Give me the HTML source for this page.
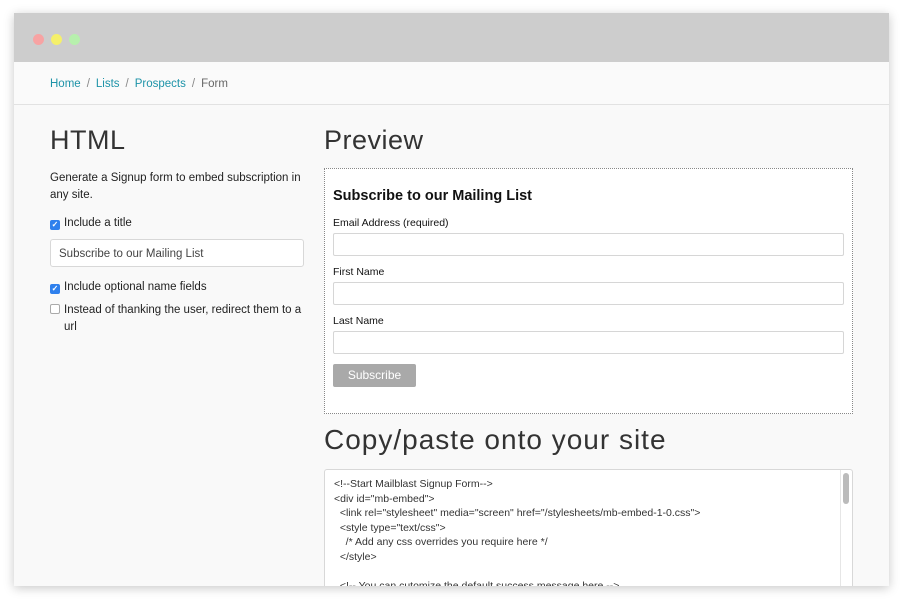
<!DOCTYPE html>
<html><head><meta charset="utf-8"><style>
*{box-sizing:border-box;margin:0;padding:0}
body{width:903px;height:600px;background:#fff;font-family:"Liberation Sans",sans-serif;position:relative;overflow:hidden}
.win{position:absolute;left:14px;top:13px;width:875px;height:573px;background:#f9f9f9;box-shadow:0 2px 10px rgba(0,0,0,.22);overflow:hidden}
.bar{height:49px;background:#cdcdcd;position:relative}
.dot{position:absolute;top:21px;width:11px;height:11px;border-radius:50%}
.crumb{height:43px;border-bottom:1px solid #e2e2e2;padding:16px 0 0 36px;font-size:11.5px;color:#666;background:#fafafa}
.crumb a{color:#1d93a8;text-decoration:none}
.crumb span{margin:0 6px;color:#888}
.l{position:absolute;left:36px;top:112px;width:254px;font-size:11.5px;color:#222}
h1{font-weight:normal;font-size:27px;color:#333;letter-spacing:.5px}
.cb{display:inline-block;width:10px;height:10px;border-radius:2px;vertical-align:-1px;margin-right:4px;color:#fff;font-size:8px;line-height:10px;text-align:center;font-weight:bold}
.on{background:#2f80ed}
.off{border:1px solid #aaa;background:#fff}
.inp{border:1px solid #d8d8d8;border-radius:3px;background:#fff;height:28px;padding:8px 8px;font-size:11.5px;color:#444}
.r{position:absolute;left:310px;top:112px;width:529px}
.pv{margin-top:12px;border:1px dotted #888;height:246px;background:#fff;padding:19px 8px 0 8px;font-size:10.5px;color:#111}
.pv h3{font-size:14.5px;margin-bottom:13px}
.lb{line-height:13px}
.fi{border:1px solid #d6d6d6;border-radius:2px;height:23px;margin:3px 0 10px}
.btn{width:83px;height:23px;background:#a9a9a9;color:#fff;border-radius:2px;font-size:12px;text-align:center;line-height:23px;margin-top:3px}
.code{margin-top:13px;border:1px solid #d8d8d8;border-radius:3px;background:#fff;height:140px;padding:7px 9px;font-size:10.5px;line-height:14.6px;color:#333;white-space:pre;position:relative}
.sb{position:absolute;right:3px;top:3px;width:6px;height:31px;background:#bbb;border-radius:3px}
.sbt{position:absolute;right:0;top:0;width:12px;height:140px;border-left:1px solid #e6e6e6}
</style></head><body>
<div class="win">
<div class="bar"><div class="dot" style="left:19px;background:#f7a3a3"></div><div class="dot" style="left:37px;background:#f5f06a"></div><div class="dot" style="left:55px;background:#b7f0ad"></div></div>
<div class="crumb"><a>Home</a><span>/</span><a>Lists</a><span>/</span><a>Prospects</a><span>/</span>Form</div>
<div class="l">
<h1>HTML</h1>
<p style="margin-top:14px;line-height:17px">Generate a Signup form to embed subscription in any site.</p>
<p style="margin-top:13px"><span class="cb on">✓</span>Include a title</p>
<div class="inp" style="margin-top:9px">Subscribe to our Mailing List</div>
<p style="margin-top:14px"><span class="cb on">✓</span>Include optional name fields</p>
<p style="margin-top:8px;padding-left:14px;text-indent:-14px;line-height:17px"><span class="cb off"></span>Instead of thanking the user, redirect them to a url</p>
</div>
<div class="r">
<h1>Preview</h1>
<div class="pv">
<h3>Subscribe to our Mailing List</h3>
<div class="lb">Email Address (required)</div><div class="fi"></div>
<div class="lb">First Name</div><div class="fi"></div>
<div class="lb">Last Name</div><div class="fi"></div>
<div class="btn">Subscribe</div>
</div>
<h1 style="margin-top:10px;font-size:28px;letter-spacing:1px">Copy/paste onto your site</h1>
<div class="code">&lt;!--Start Mailblast Signup Form--&gt;
&lt;div id="mb-embed"&gt;
  &lt;link rel="stylesheet" media="screen" href="/stylesheets/mb-embed-1-0.css"&gt;
  &lt;style type="text/css"&gt;
    /* Add any css overrides you require here */
  &lt;/style&gt;

  &lt;!-- You can cutomize the default success message here --&gt;<div class="sbt"></div><div class="sb"></div></div>
</div>
</div>
</body></html>
